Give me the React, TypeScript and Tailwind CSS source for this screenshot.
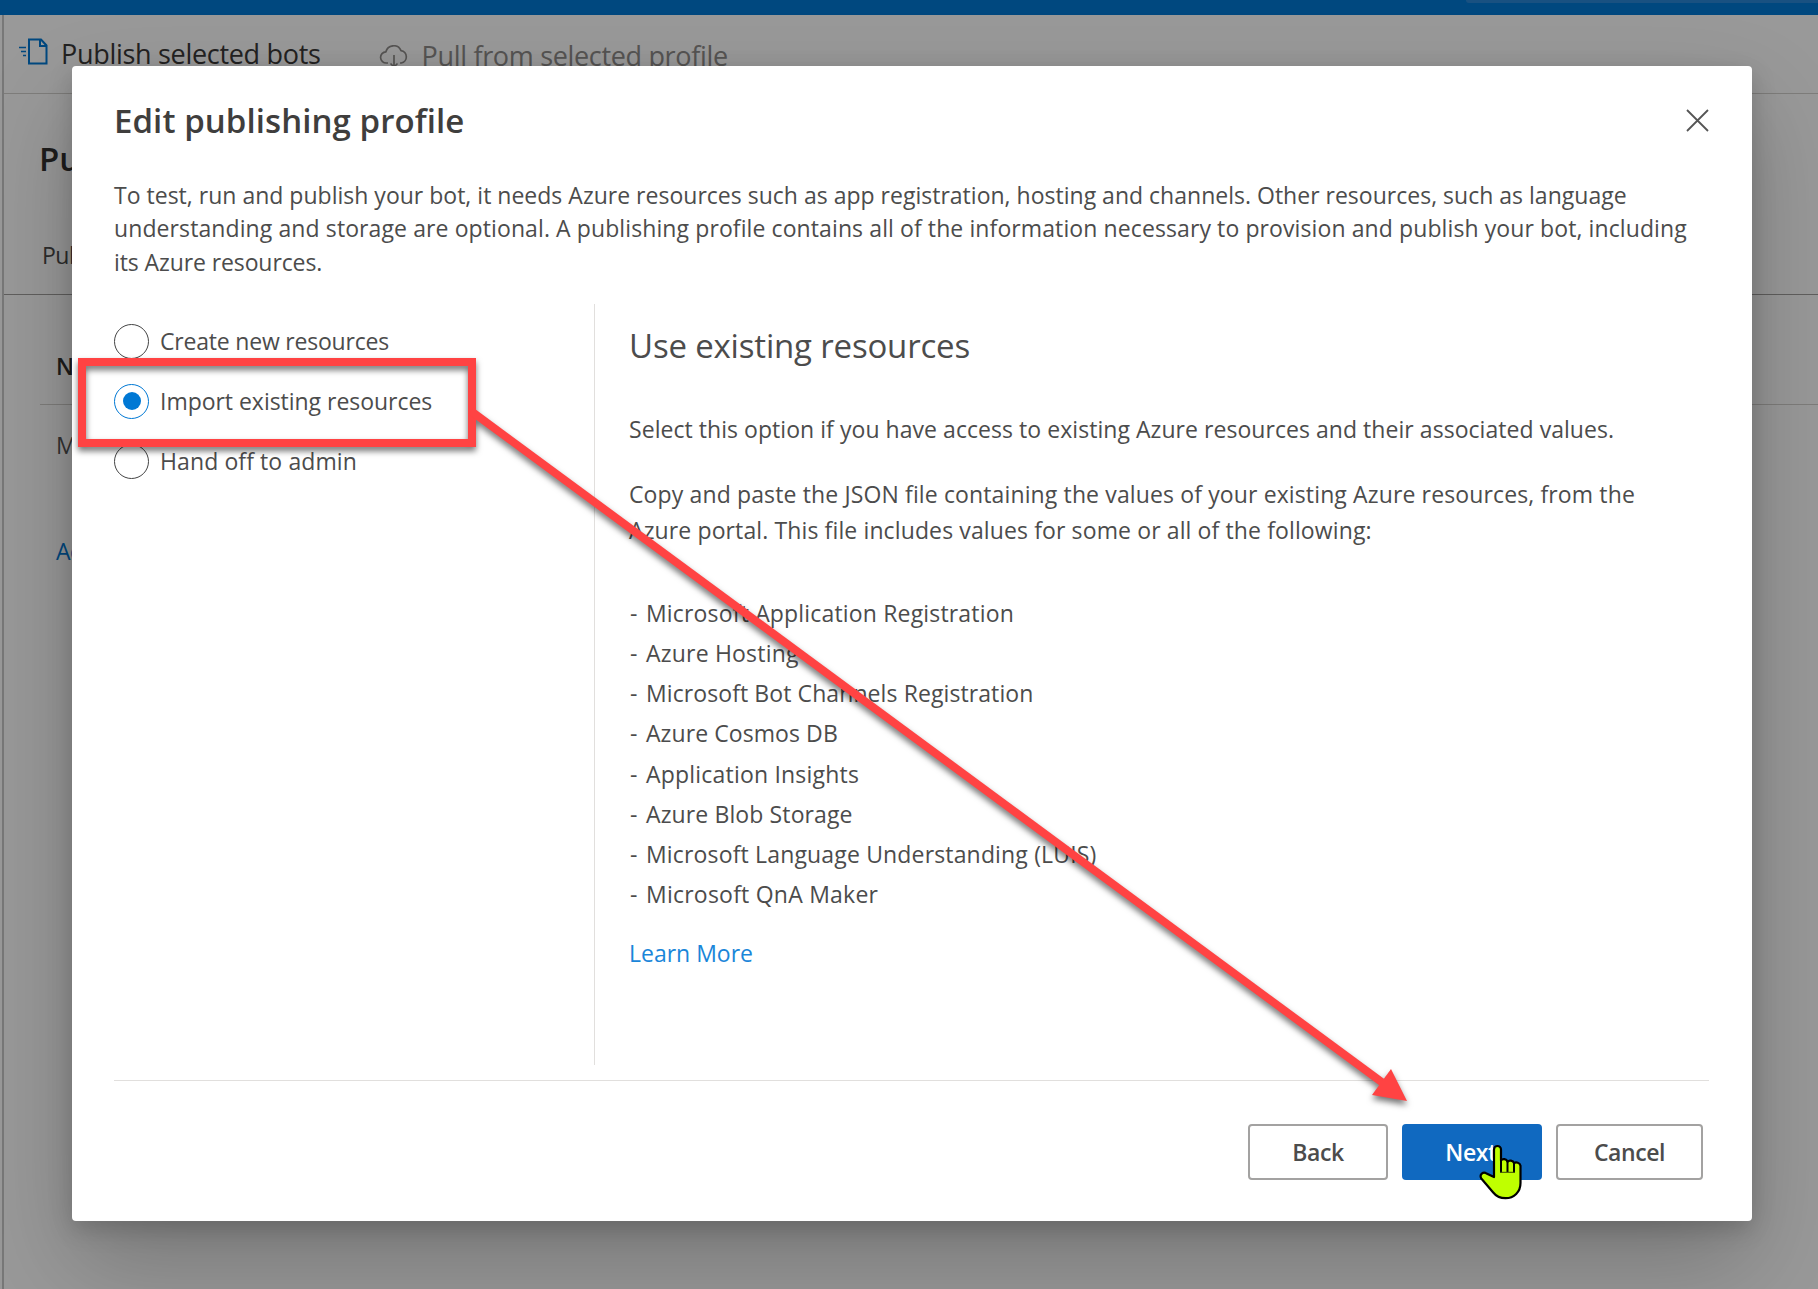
import React from "react";

const resources = [
  ["Microsoft Application Registration", "tracking-[0.17px]"],
  ["Azure Hosting", "tracking-[0.2px]"],
  ["Microsoft Bot Channels Registration", "tracking-[0.09px]"],
  ["Azure Cosmos DB", "tracking-[0.08px]"],
  ["Application Insights", "tracking-[0.2px]"],
  ["Azure Blob Storage", "tracking-[0.12px]"],
  ["Microsoft Language Understanding (LUIS)", "tracking-[0.16px]"],
  ["Microsoft QnA Maker", "tracking-[0.23px]"],
];

function Radio({ label, tracking, checked = false }: { label: string; tracking: string; checked?: boolean }) {
  return (
    <div className="flex h-[60px] items-center">
      <span
        className={
          checked
            ? "flex size-[35px] items-center justify-center rounded-full border-[1.5px] border-[#0078d4]"
            : "size-[35px] rounded-full border-[1.5px] border-[#444]"
        }
      >
        {checked && <span className="size-[18px] rounded-full bg-[#0078d4]" />}
      </span>
      <span className="ml-[11px] pt-px">
        <span className={tracking}>{label}</span>
      </span>
    </div>
  );
}

function Background() {
  return (
    <div className="flex h-full flex-col bg-white">
      <div className="flex h-[15px] justify-end bg-[#0078d4]">
        <div className="h-[3px] w-[352px] rounded-bl bg-[#2b88d8]" />
      </div>
      <div className="flex flex-1 flex-col border-l-2 border-[#c8c8c8] ml-[2px]">
        <div className="flex h-[79px] items-start border-b border-[#d2d0ce] text-[27px] leading-[36px] text-[#3b3a39]">
          <svg className="ml-[15px] mt-[22px]" width="30" height="29" viewBox="0 0 30 29" fill="none" stroke="#0078d4" strokeWidth="2">
            <path d="M10 2.500h12l5.500 6v18H10zM21 2.500V9h6.500" />
            <path d="M0 10.500h7M2 14.500h5M4 18.500h3" strokeWidth="1.600" />
          </svg>
          <span className="ml-[12px] mt-[21px] tracking-[-0.3px]">Publish selected bots</span>
          <svg className="ml-[58px] mt-[30px]" width="30" height="24" viewBox="0 0 30 24" fill="none" stroke="#8f8d8b" strokeWidth="1.700">
            <path d="M9 18H7.500a5.600 5.600 0 0 1-.6-11.200A8 8 0 0 1 22 5.600a6.300 6.300 0 0 1 .3 12.400H21M15 10v12M11.500 18.500 15 22l3.500-3.500" />
          </svg>
          <span className="ml-[13px] mt-[23px] tracking-[-0.33px] text-[#8f8d8b]">Pull from selected profile</span>
        </div>
        <div className="flex h-[201px] flex-col border-b border-[#a19f9d] pl-[35px] text-[#323130]">
          <span className="mt-[42px] text-[33px] font-semibold leading-[46px]">Publish</span>
          <span className="mt-[56px] pl-[3px] text-[23px] leading-[34px] tracking-[-0.5px] text-[#4a4a4a]">Publish</span>
        </div>
        <div className="ml-[36px] flex h-[110px] items-end border-b border-[#d2d0ce] pb-[21px] pl-[16px] text-[23px] font-semibold leading-[34px] text-[#323130]">Name</div>
        <div className="flex flex-col pl-[52px] text-[23px] leading-[34px] text-[#555]">
          <span className="mt-[23px]">My profile</span>
          <span className="mt-[72px] tracking-[-0.5px] text-[#0078d4]">Add new</span>
        </div>
      </div>
    </div>
  );
}

function Annotation() {
  return (
    <svg className="pointer-events-none absolute left-0 top-0 drop-shadow-[0_4px_3px_rgba(0,0,0,0.55)]" width="1818" height="1289" fill="none">
      <rect x="82" y="362" width="390" height="81" stroke="#ff4343" strokeWidth="8" />
      <path d="M471 411 1385 1084.500" stroke="#ff4343" strokeWidth="8" />
      <path d="M1407 1101 1391 1069 1372 1095z" fill="#ff4343" />
    </svg>
  );
}

function Pointer() {
  return (
    <svg className="absolute left-[1479px] top-[1144px]" width="44" height="57" viewBox="0 0 44 57">
      <path
        d="M15 33V5.500a3.500 3.500 0 0 1 7 0V16.500c1.500-2.200 5.500-1.700 6.500 1.200 1.500-1.900 5.500-1.400 6.500 1.500 2-1.500 6-.5 6.500 2.500V39c0 9-6.500 15.200-15 15.200-5.500 0-9.500-2.200-12.500-6L2.300 34.500c-2.300-4 2-7.500 5.200-5z"
        fill="#bfff00"
        stroke="#000"
        strokeWidth="2.200"
        strokeLinejoin="round"
      />
      <path d="M22 16v12.500M28.500 17v11M35 19v9.500" stroke="#000" strokeWidth="2" />
      <path d="M21 28.300h15" stroke="#3c4a00" strokeWidth="1" />
    </svg>
  );
}

export default function App() {
  return (
    <div className="relative h-[1289px] w-[1818px] overflow-hidden font-['Open_Sans',sans-serif]">
      <Background />
      <div className="absolute inset-0 bg-black/40 pl-[72px] pt-[66px]">
        <div className="flex h-[1155px] w-[1680px] flex-col rounded-[4px] bg-white pl-[42px] pr-[43px] text-[23px] text-[#4c4c4c] shadow-[0_43px_96px_rgba(0,0,0,0.22),0_8px_24px_rgba(0,0,0,0.18)]">
          <div className="flex h-[110px] items-start justify-between">
            <h1 className="mt-[32px] text-[33px] font-semibold leading-[46px] tracking-[0.08px] text-[#3f3e3d]">Edit publishing profile</h1>
            <svg className="mt-[43px]" width="23" height="23" viewBox="0 0 23 23" stroke="#555" strokeWidth="1.800">
              <path d="M1 1l21 21M22 1 1 22" />
            </svg>
          </div>
          <div className="h-[128px] whitespace-nowrap pt-[3px] leading-[33.300px]">
            <p className="tracking-[0.01px]">To test, run and publish your bot, it needs Azure resources such as app registration, hosting and channels. Other resources, such as language</p>
            <p className="tracking-[0.1px]">understanding and storage are optional. A publishing profile contains all of the information necessary to provision and publish your bot, including</p>
            <p className="tracking-[-0.1px]">its Azure resources.</p>
          </div>
          <div className="flex h-[761px]">
            <div className="w-[480px] pt-[7px]">
              <Radio label="Create new resources" tracking="tracking-[-0.2px]" />
              <Radio label="Import existing resources" tracking="tracking-[-0.03px]" checked />
              <Radio label="Hand off to admin" tracking="tracking-[0.1px]" />
            </div>
            <div className="flex flex-1 flex-col whitespace-nowrap border-l-[1.5px] border-[#e1dfdd] pl-[34px] leading-[36.500px]">
              <h2 className="mt-[19px] text-[33px] leading-[46px] tracking-[-0.18px]">Use existing resources</h2>
              <p className="mt-[42px] tracking-[0.05px]">Select this option if you have access to existing Azure resources and their associated values.</p>
              <p className="mt-[28px] tracking-[0.13px]">Copy and paste the JSON file containing the values of your existing Azure resources, from the</p>
              <p className="tracking-[0.12px]">Azure portal. This file includes values for some or all of the following:</p>
              <ul className="mt-[44px] pl-px leading-[40.250px]">
                {resources.map(([name, tracking]) => (
                  <li key={name} className="flex">
                    <span className="w-[16px]">-</span>
                    <span className={tracking}>{name}</span>
                  </li>
                ))}
              </ul>
              <a className="mt-[20px] tracking-[0px] text-[#1a86d9]">Learn More</a>
            </div>
          </div>
          <div className="mt-[15px] flex justify-end gap-[14px] border-t-[1.5px] border-[#e1dfdd] pr-[6px] pt-[43px] font-semibold tracking-[-0.4px]">
            <button className="h-[56px] w-[140px] rounded-[4px] border-2 border-[#a3a2a1]">Back</button>
            <button className="h-[56px] w-[140px] rounded-[4px] bg-[#1069c0] pr-[2px] text-white">Next</button>
            <button className="h-[56px] w-[147px] rounded-[4px] border-2 border-[#a3a2a1]">Cancel</button>
          </div>
        </div>
      </div>
      <Annotation />
      <Pointer />
    </div>
  );
}
